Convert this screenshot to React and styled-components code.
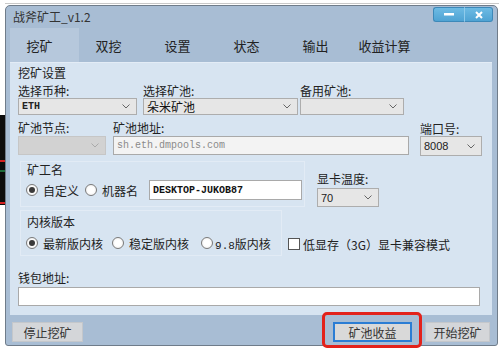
import React from "react";
import styled, { createGlobalStyle, css } from "styled-components";

const GlobalStyle = createGlobalStyle`
  html, body { margin: 0; padding: 0; background: #fff; }
  body { font-family: "Noto Sans CJK SC", "Microsoft YaHei", sans-serif; color: #222; }
  * { box-sizing: border-box; }
`;

const Desktop = styled.div`
  display: flex;
  width: 499px;
  height: 349px;
  overflow: hidden;
  background: #fff;
`;

const LeftStrip = styled.div`
  width: 5px;
  flex: none;
  display: flex;
  flex-direction: column;
  padding-top: 115px;
`;

const DarkBlock = styled.div`
  height: 90px;
  background: #0c0c0c;
  display: flex;
  flex-direction: column;
  padding-top: 45px;
  gap: 8px;
`;

const Streak = styled.div`
  height: 2px;
  background: ${(p) => p.$color};
  margin-bottom: ${(p) => p.$mb || 0}px;
`;

const RightCol = styled.div`
  flex: 1;
  display: flex;
  flex-direction: column;
`;

const TopStrip = styled.div`
  height: 5px;
  flex: none;
  border-top: 3px solid #fff;
  border-bottom: 1px solid transparent;
  position: relative;
  &::before {
    content: "";
    display: block;
    height: 1px;
    background: #c9c9c9;
  }
`;

const Window = styled.div`
  width: 493px;
  height: 341px;
  border: 1px solid #6f7c8a;
  border-radius: 5px 5px 3px 3px;
  background: #a8bdd4;
  display: flex;
  flex-direction: column;
`;

const TitleBar = styled.div`
  height: 22px;
  flex: none;
  display: flex;
  align-items: flex-start;
  padding-left: 7px;
`;

const Title = styled.div`
  font-size: 12px;
  line-height: 22px;
  color: #333;
`;

const WinButtons = styled.div`
  margin-left: auto;
  margin-right: 4px;
  margin-top: 1px;
  display: flex;
`;

const WinButton = styled.div`
  width: ${(p) => p.$w}px;
  height: 15px;
  display: flex;
  align-items: center;
  justify-content: center;
  background: linear-gradient(#6dbbe4, #4fa3d3);
  border: 1px solid #3d89b9;
  ${(p) =>
    p.$first
      ? css`border-radius: 3px 0 0 3px; border-right: 1px solid #8fcbeb;`
      : css`border-radius: 0 3px 3px 0; border-left: none;`}
`;

const TabBar = styled.div`
  height: 34px;
  flex: none;
  display: flex;
  padding-left: 4px;
`;

const Tab = styled.div`
  width: 69px;
  padding-right: 10px;
  display: flex;
  align-items: center;
  justify-content: center;
  font-size: 13px;
  color: #222;
  background: ${(p) => (p.$active ? "#b6c8dc" : "transparent")};
`;

const Panel = styled.div`
  margin: 0 5px 0 4px;
  height: 253px;
  flex: none;
  background: #d7e4f1;
  border-top: 1px solid #e3ecf6;
  padding: 2px 0 0 8px;
  display: flex;
  flex-direction: column;
`;

const SectionTitle = styled.div`
  font-size: 12px;
  line-height: 16px;
  height: 16px;
`;

const Row = styled.div`
  display: flex;
  align-items: flex-start;
  margin-top: ${(p) => p.$mt || 0}px;
`;

const Field = styled.div`
  display: flex;
  flex-direction: column;
  width: ${(p) => p.$w}px;
  margin-left: ${(p) => p.$ml || 0}px;
  margin-top: ${(p) => p.$mt || 0}px;
`;

const FieldLabel = styled.div`
  font-size: 12px;
  height: 17px;
  line-height: ${(p) => p.$lh || 18}px;
  white-space: nowrap;
`;

const SelectBox = styled.div`
  height: ${(p) => p.$h || 17}px;
  display: flex;
  align-items: center;
  padding: 0 6px 0 3px;
  background: ${(p) => (p.$disabled ? "#d2d2d2" : "#e6e6e6")};
  border: 1px solid ${(p) => (p.$disabled ? "#c6c6c6" : "#adadad")};
`;

const SelectText = styled.span`
  flex: 1;
  white-space: nowrap;
  ${(p) =>
    p.$kind === "mono"
      ? css`font-family: "Liberation Mono", monospace; font-size: 10px; font-weight: bold; color: #222;`
      : p.$kind === "num"
      ? css`font-family: "Liberation Sans", Arial, sans-serif; font-size: 11px; color: #222;`
      : css`font-size: 12px; color: #111;`}
`;

const TextInput = styled.div`
  width: ${(p) => p.$w}px;
  height: ${(p) => p.$h || 19}px;
  margin-left: ${(p) => p.$ml || 0}px;
  margin-top: ${(p) => p.$mt || 0}px;
  display: flex;
  align-items: center;
  padding-left: 3px;
  background: ${(p) => p.$bg || "#fff"};
  border: 1px solid #a9a9a9;
  font-family: "Liberation Mono", monospace;
  font-size: 10px;
  white-space: nowrap;
  color: ${(p) => p.$color || "#111"};
  font-weight: ${(p) => (p.$bold ? "bold" : "normal")};
`;

const Group = styled.div`
  width: ${(p) => p.$w}px;
  margin-left: 2px;
  border: 1px solid #e2ebf5;
  padding: ${(p) => p.$pad};
  display: flex;
  flex-direction: column;
`;

const GroupTitle = styled.div`
  font-size: 12px;
  line-height: 16px;
  height: 16px;
  margin-left: 1px;
`;

const OptionRow = styled.div`
  display: flex;
  align-items: center;
  margin-top: ${(p) => p.$mt || 0}px;
  height: ${(p) => p.$h || 16}px;
`;

const Radio = styled.span`
  width: 12px;
  height: 12px;
  flex: none;
  border-radius: 50%;
  border: 1px solid #7a7a7a;
  background: radial-gradient(circle, #fff 40%, #e8e8e8);
  display: flex;
  align-items: center;
  justify-content: center;
  margin-left: ${(p) => p.$ml || 0}px;
  &::after {
    content: "";
    width: 6px;
    height: 6px;
    border-radius: 50%;
    background: ${(p) => (p.$checked ? "#3a3a3a" : "transparent")};
  }
`;

const Checkbox = styled.span`
  width: 12px;
  height: 12px;
  flex: none;
  border: 1px solid #555;
  background: #fff;
  margin-left: ${(p) => p.$ml || 0}px;
`;

const OptionText = styled.span`
  font-size: 12px;
  white-space: nowrap;
  margin-left: ${(p) => p.$ml || 5}px;
`;

const MonoPart = styled.span`
  font-family: "Liberation Mono", monospace;
  font-size: 11px;
`;

const BottomBar = styled.div`
  flex: 1;
  display: flex;
  align-items: flex-start;
  padding-top: 7px;
`;

const Button = styled.div`
  width: ${(p) => p.$w}px;
  height: 20px;
  margin-left: ${(p) => p.$ml || 0}px;
  display: flex;
  align-items: center;
  justify-content: center;
  font-size: 12px;
  color: #333;
  background: ${(p) => (p.$primary ? "#d9d9d9" : "#d4d6d9")};
  border: ${(p) => (p.$primary ? "2px solid #2b7dd4" : "1px solid #c4c7cb")};
`;

const Highlight = styled.div`
  position: relative;
  margin-left: ${(p) => p.$ml || 0}px;
  &::after {
    content: "";
    position: absolute;
    top: -10px;
    right: -10px;
    bottom: -6px;
    left: -11px;
    border: 3px solid #e3221b;
    border-radius: 5px;
    pointer-events: none;
  }
`;

const Chevron = ({ color = "#666" }) => (
  <svg width="8" height="5" viewBox="0 0 8 5">
    <path d="M0.5 0.5 L4 4 L7.5 0.5" fill="none" stroke={color} strokeWidth="1" />
  </svg>
);

const Select = ({ text, kind, h, disabled }) => (
  <SelectBox $h={h} $disabled={disabled}>
    <SelectText $kind={kind}>{text}</SelectText>
    <Chevron color={disabled ? "#aaa" : "#666"} />
  </SelectBox>
);

const tabs = ["挖矿", "双挖", "设置", "状态", "输出", "收益计算"];

export default function App() {
  return (
    <>
      <GlobalStyle />
      <Desktop>
        <LeftStrip>
          <DarkBlock>
            <Streak $color="#d42020" />
            <Streak $color="#1f6b3a" $mb={22} />
            <Streak $color="#d42020" />
          </DarkBlock>
        </LeftStrip>
        <RightCol>
          <TopStrip />
          <Window>
            <TitleBar>
              <Title>战斧矿工_v1.2</Title>
              <WinButtons>
                <WinButton $w={32} $first>
                  <svg width="10" height="3" viewBox="0 0 10 3">
                    <rect x="0" y="0" width="10" height="2.5" fill="#fff" />
                  </svg>
                </WinButton>
                <WinButton $w={28}>
                  <svg width="8" height="8" viewBox="0 0 8 8">
                    <path d="M1 1 L7 7 M7 1 L1 7" stroke="#fff" strokeWidth="2" />
                  </svg>
                </WinButton>
              </WinButtons>
            </TitleBar>
            <TabBar>
              {tabs.map((t, i) => (
                <Tab key={t} $active={i === 0}>
                  {t}
                </Tab>
              ))}
            </TabBar>
            <Panel>
              <SectionTitle>挖矿设置</SectionTitle>
              <Row>
                <Field $w={119}>
                  <FieldLabel $lh={19}>选择币种:</FieldLabel>
                  <Select text="ETH" kind="mono" />
                </Field>
                <Field $w={155} $ml={6}>
                  <FieldLabel $lh={19}>选择矿池:</FieldLabel>
                  <Select text="朵米矿池" />
                </Field>
                <Field $w={104} $ml={2}>
                  <FieldLabel $lh={19}>备用矿池:</FieldLabel>
                  <Select text="" />
                </Field>
              </Row>
              <Row $mt={4}>
                <Field $w={88}>
                  <FieldLabel $lh={17}>矿池节点:</FieldLabel>
                  <Select text="" h={19} disabled />
                </Field>
                <Field $w={296} $ml={7}>
                  <FieldLabel $lh={17}>矿池地址:</FieldLabel>
                  <TextInput $w={296} $bg="#f3f3f3" $color="#8a8a8a">
                    sh.eth.dmpools.com
                  </TextInput>
                </Field>
                <Field $w={62} $ml={11}>
                  <FieldLabel $lh={19}>端口号:</FieldLabel>
                  <Select text="8008" kind="num" h={20} />
                </Field>
              </Row>
              <Row $mt={5}>
                <Group $w={285} $pad="0 0 6px 5px">
                  <GroupTitle>矿工名</GroupTitle>
                  <OptionRow $mt={2} $h={20}>
                    <Radio $checked />
                    <OptionText>自定义</OptionText>
                    <Radio $ml={6} />
                    <OptionText>机器名</OptionText>
                    <TextInput $w={153} $h={20} $ml={11} $bold>
                      DESKTOP-JUKOB87
                    </TextInput>
                  </OptionRow>
                </Group>
                <Field $w={62} $ml={12} $mt={10}>
                  <FieldLabel $lh={16}>显卡温度:</FieldLabel>
                  <Select text="70" kind="num" h={19} />
                </Field>
              </Row>
              <Row $mt={3}>
                <Group $w={262} $pad="3px 0 4px 5px">
                  <GroupTitle>内核版本</GroupTitle>
                  <OptionRow $mt={5}>
                    <Radio $checked />
                    <OptionText>最新版内核</OptionText>
                    <Radio $ml={9} />
                    <OptionText>稳定版内核</OptionText>
                    <Radio $ml={12} />
                    <OptionText $ml={2}>
                      <MonoPart>9.8</MonoPart>版内核
                    </OptionText>
                  </OptionRow>
                </Group>
                <OptionRow $mt={26}>
                  <Checkbox $ml={6} />
                  <OptionText $ml={3}>低显存（3G）显卡兼容模式</OptionText>
                </OptionRow>
              </Row>
              <FieldLabel as="div" $lh={16} style={{ marginTop: 14 }}>
                钱包地址:
              </FieldLabel>
              <TextInput $w={462} $mt={0} />
            </Panel>
            <BottomBar>
              <Button $w={71} $ml={6}>
                停止挖矿
              </Button>
              <Highlight $ml={250}>
                <Button $w={79} $primary>
                  矿池收益
                </Button>
              </Highlight>
              <Button $w={65} $ml={13}>
                开始挖矿
              </Button>
            </BottomBar>
          </Window>
        </RightCol>
      </Desktop>
    </>
  );
}
